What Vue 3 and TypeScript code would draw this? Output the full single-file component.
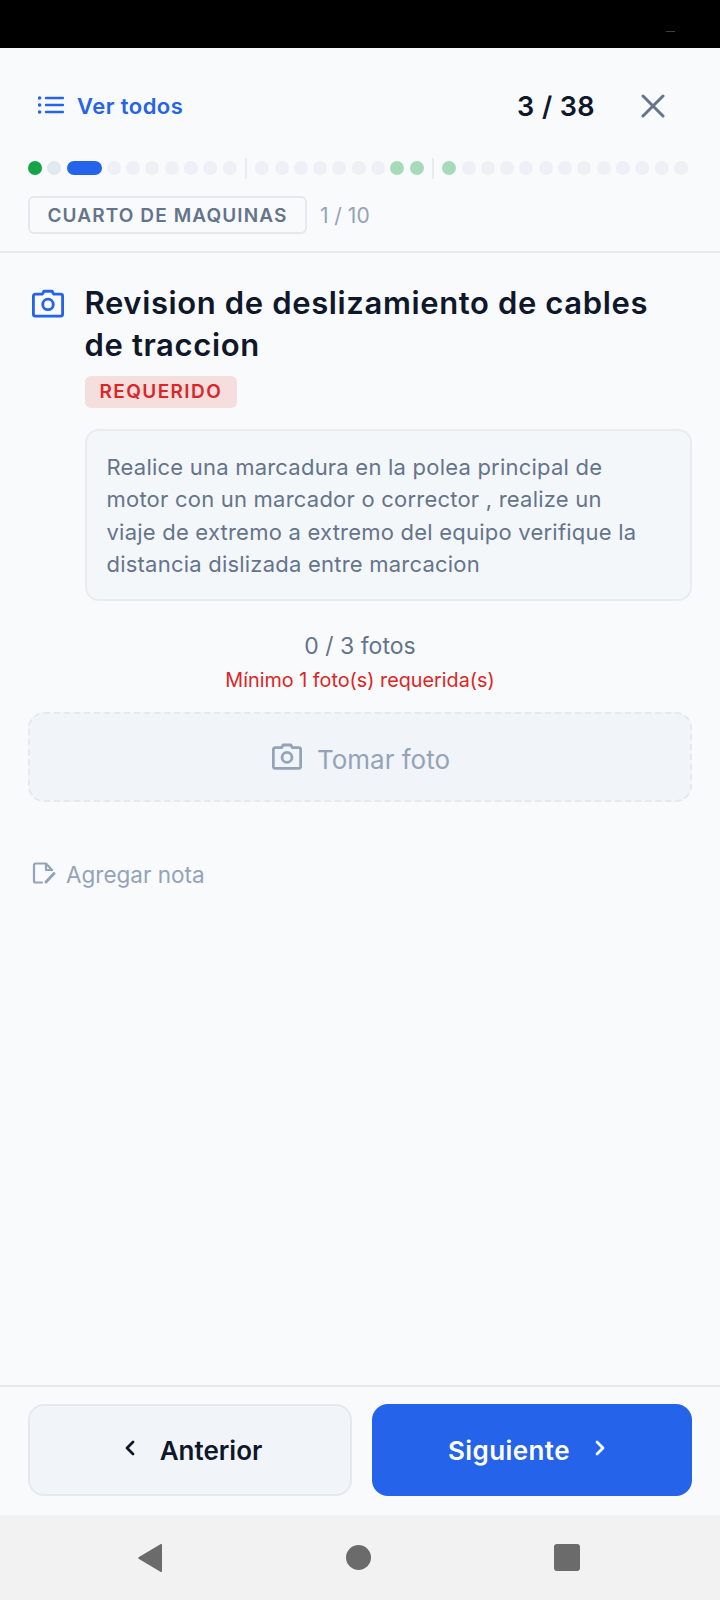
<script setup lang="ts">
type Dot = 'done' | 'seen' | 'current' | 'soft' | 'idle'

const repeat = (kind: Dot, n: number): Dot[] => Array.from({ length: n }, () => kind)

const groups: Dot[][] = [
  ['done', 'seen', 'current', ...repeat('idle', 7)],
  [...repeat('idle', 7), 'soft', 'soft'],
  ['soft', ...repeat('idle', 12)],
]
</script>

<template>
  <div class="screen">
    <div class="status-bar"><span class="status-mark"></span></div>

    <div class="top">
      <div class="top-row">
        <div class="see-all">
          <svg class="list-icon" viewBox="0 0 26 20" fill="none" stroke="currentColor" stroke-width="2.4" stroke-linecap="round">
            <path d="M8 3h17M8 10h17M8 17h17" />
            <path d="M1.6 3h.1M1.6 10h.1M1.6 17h.1" stroke-width="3.4" />
          </svg>
          <span>Ver todos</span>
        </div>
        <div class="top-right">
          <span class="counter">3 / 38</span>
          <svg class="close-icon" viewBox="0 0 24 24" fill="none" stroke="currentColor" stroke-width="3" stroke-linecap="round">
            <path d="M2 2l20 20M22 2L2 22" />
          </svg>
        </div>
      </div>

      <div class="dots">
        <template v-for="(group, g) in groups" :key="g">
          <span v-if="g > 0" class="dot-sep"></span>
          <span v-for="(dot, i) in group" :key="i" class="dot" :class="dot"></span>
        </template>
      </div>

      <div class="section-row">
        <span class="section-tag">CUARTO DE MAQUINAS</span>
        <span class="section-count">1 / 10</span>
      </div>
    </div>

    <div class="body">
      <div class="question">
        <svg class="cam-icon" viewBox="0 0 34 30" fill="none" stroke="currentColor" stroke-width="3" stroke-linejoin="round">
          <path d="M11 5l1.6-3h8.8L23 5h7.5a2 2 0 0 1 2 2v19.5a2 2 0 0 1-2 2h-27a2 2 0 0 1-2-2V7a2 2 0 0 1 2-2z" />
          <circle cx="17" cy="16" r="5.6" />
        </svg>
        <div class="question-main">
          <h1 class="title">Revision de deslizamiento de cables<br />de traccion</h1>
          <span class="badge">REQUERIDO</span>
          <p class="hint">
            Realice una marcadura en la polea principal de<br />
            motor con un marcador o corrector , realize un<br />
            viaje de extremo a extremo del equipo verifique la<br />
            distancia dislizada entre marcacion
          </p>
        </div>
      </div>

      <div class="photo-count">0 / 3 fotos</div>
      <div class="photo-min">Mínimo 1 foto(s) requerida(s)</div>

      <div class="take-photo">
        <svg class="take-icon" viewBox="0 0 34 30" fill="none" stroke="currentColor" stroke-width="3.2" stroke-linejoin="round">
          <path d="M11 5l1.6-3h8.8L23 5h7.5a2 2 0 0 1 2 2v19.5a2 2 0 0 1-2 2h-27a2 2 0 0 1-2-2V7a2 2 0 0 1 2-2z" />
          <circle cx="17" cy="16" r="5.6" />
        </svg>
        <span class="take-label">Tomar foto</span>
      </div>

      <div class="add-note">
        <svg class="note-icon" viewBox="0 0 24 22" fill="none" stroke="currentColor" stroke-width="2.2" stroke-linecap="round" stroke-linejoin="round">
          <path d="M10 20.5H3.5a1.5 1.5 0 0 1-1.5-1.5V3a1.5 1.5 0 0 1 1.5-1.5h10.5l6 6.5" />
          <path d="M14 2v6h6" />
          <path d="M14 20l8-8.5" stroke-width="3" />
        </svg>
        <span>Agregar nota</span>
      </div>
    </div>

    <div class="footer">
      <button class="btn btn-prev">
        <svg class="chev" viewBox="0 0 12 18" fill="none" stroke="currentColor" stroke-width="2.8" stroke-linecap="round" stroke-linejoin="round">
          <path d="M9 3L3 9l6 6" />
        </svg>
        <span>Anterior</span>
      </button>
      <button class="btn btn-next">
        <span>Siguiente</span>
        <svg class="chev" viewBox="0 0 12 18" fill="none" stroke="currentColor" stroke-width="2.8" stroke-linecap="round" stroke-linejoin="round">
          <path d="M3 3l6 6-6 6" />
        </svg>
      </button>
    </div>

    <div class="nav-bar">
      <svg class="nav-back" viewBox="0 0 25 28"><path d="M24 1v26a1 1 0 0 1-1.6.8L1 15a1.2 1.2 0 0 1 0-2L22.4.2A1 1 0 0 1 24 1z" fill="currentColor" /></svg>
      <span class="nav-home"></span>
      <span class="nav-square"></span>
    </div>
  </div>
</template>

<style>
html, body { margin: 0; background: #f8fafc; }
</style>

<style scoped>
.screen {
  width: 720px;
  height: 1600px;
  display: flex;
  flex-direction: column;
  background: #f8fafc;
  font-family: Inter, 'Noto Sans', sans-serif;
  color: #0f172a;
  overflow: hidden;
}

.status-bar {
  height: 48px;
  flex-shrink: 0;
  background: #000;
  position: relative;
}
.status-mark {
  position: absolute;
  left: 666px;
  top: 31px;
  width: 9px;
  height: 1px;
  background: #4a3a3a;
}

/* ---- top ---- */
.top {
  padding: 0 28px;
  border-bottom: 2px solid #e5e9ef;
  height: 205px;
  flex-shrink: 0;
  box-sizing: border-box;
}
.top-row {
  height: 112px;
  display: flex;
  align-items: center;
  justify-content: space-between;
  padding: 4px 27px 0 10px;
  box-sizing: border-box;
}
.see-all {
  display: flex;
  align-items: center;
  gap: 13px;
  color: #2563eb;
  font-size: 22px;
  font-weight: 600;
  letter-spacing: 0.45px;
}
.list-icon { width: 26px; height: 20px; margin-bottom: 2px; }
.top-right {
  display: flex;
  align-items: center;
  gap: 46px;
}
.counter {
  font-size: 27px;
  font-weight: 600;
  letter-spacing: 0.4px;
}
.close-icon { width: 24px; height: 24px; color: #64748b; }

.dots {
  display: flex;
  align-items: center;
  gap: 5.3px;
  height: 22px;
  margin-top: -3px;
}
.dot {
  width: 14px;
  height: 14px;
  border-radius: 7px;
  flex-shrink: 0;
}
.dot.done { background: #16a34a; }
.dot.seen { background: #e2e8f0; }
.dot.current { width: 35px; background: #2563eb; }
.dot.soft { background: #a7dbb8; }
.dot.idle { background: #edf0f4; }
.dot-sep {
  width: 2px;
  height: 21px;
  background: #e8ecf1;
  margin: 0 3px;
  flex-shrink: 0;
}

.section-row {
  display: flex;
  align-items: center;
  gap: 13px;
  margin-top: 17px;
}
.section-tag {
  border: 2px solid #e5e9ef;
  border-radius: 6px;
  padding: 0 17.5px;
  height: 38px;
  box-sizing: border-box;
  display: flex;
  align-items: center;
  font-size: 19px;
  font-weight: 600;
  letter-spacing: 1.1px;
  color: #64748b;
}
.section-count { font-size: 21px; color: #94a3b8; }

/* ---- body ---- */
.body {
  flex: 1;
  padding: 0 28px;
}
.question {
  display: flex;
  gap: 20.5px;
  padding-top: 29px;
}
.cam-icon {
  width: 32px;
  height: 29px;
  color: #2563eb;
  flex-shrink: 0;
  margin: 7px 0 0 4px;
}
.question-main { flex: 1; }
.title {
  margin: 0;
  font-size: 31px;
  line-height: 42px;
  font-weight: 600;
  letter-spacing: 0.63px;
}
.badge {
  display: inline-block;
  margin-top: 10px;
  background: #f5dede;
  color: #dc2626;
  font-size: 19px;
  font-weight: 600;
  letter-spacing: 1.4px;
  line-height: 32px;
  padding: 0 15px;
  border-radius: 6px;
}
.hint {
  margin: 21px 0 0;
  background: #f4f7fa;
  border: 2px solid #e8ecf1;
  border-radius: 14px;
  padding: 20px;
  height: 172px;
  box-sizing: border-box;
  font-size: 22px;
  line-height: 32.4px;
  letter-spacing: 0.22px;
  color: #64748b;
}
.photo-count {
  text-align: center;
  margin-top: 30px;
  font-size: 23px;
  line-height: 30px;
  color: #64748b;
}
.photo-min {
  text-align: center;
  margin-top: 5px;
  font-size: 19.8px;
  line-height: 28px;
  color: #dc2626;
}
.take-photo {
  margin-top: 18px;
  height: 90px;
  box-sizing: border-box;
  border: 2px dashed #e5e9ef;
  border-radius: 16px;
  background: #f1f5f9;
  display: flex;
  align-items: center;
  justify-content: center;
  gap: 16px;
  color: #94a3b8;
  font-size: 26px;
  font-weight: 400;
}
.take-label { padding-top: 4px; }
.take-icon { width: 30px; height: 27px; margin: 0 -1px 2px 2px; }
.add-note {
  display: flex;
  align-items: center;
  gap: 10px;
  margin-top: 59px;
  padding-left: 4px;
  color: #94a3b8;
  font-size: 22.5px;
}
.note-icon { width: 24px; height: 22px; margin-bottom: 3px; }

/* ---- footer ---- */
.footer {
  display: flex;
  gap: 20px;
  height: 130px;
  box-sizing: border-box;
  border-top: 2px solid #e5e9ef;
  padding: 17px 28px 0;
  flex-shrink: 0;
}
.btn {
  flex: 1 1 0;
  min-width: 0;
  height: 92px;
  padding: 0;
  border-radius: 16px;
  display: flex;
  align-items: center;
  justify-content: center;
  gap: 24px;
  font-family: inherit;
  font-size: 26px;
  font-weight: 600;
  box-sizing: border-box;
}
.btn-prev {
  background: #f1f5f9;
  border: 2px solid #e5e9ef;
  color: #0f172a;
}
.btn-prev .chev { margin-left: 6px; }
.btn-next {
  background: #2563eb;
  border: none;
  color: #fff;
}
.btn-next span { letter-spacing: 0.4px; }
.btn-next .chev { margin-right: 10px; }
.chev { width: 12px; height: 18px; margin-bottom: 4px; }

.nav-bar {
  height: 85px;
  flex-shrink: 0;
  background: #f2f2f2;
  display: flex;
  align-items: center;
  color: #6b6b6b;
  padding: 0 140px 0 138px;
  justify-content: space-between;
}
.nav-back { width: 25px; height: 28px; }
.nav-home {
  width: 25px;
  height: 25px;
  border-radius: 50%;
  background: #6b6b6b;
}
.nav-square {
  width: 26px;
  height: 27px;
  border-radius: 3px;
  background: #6b6b6b;
}
</style>
